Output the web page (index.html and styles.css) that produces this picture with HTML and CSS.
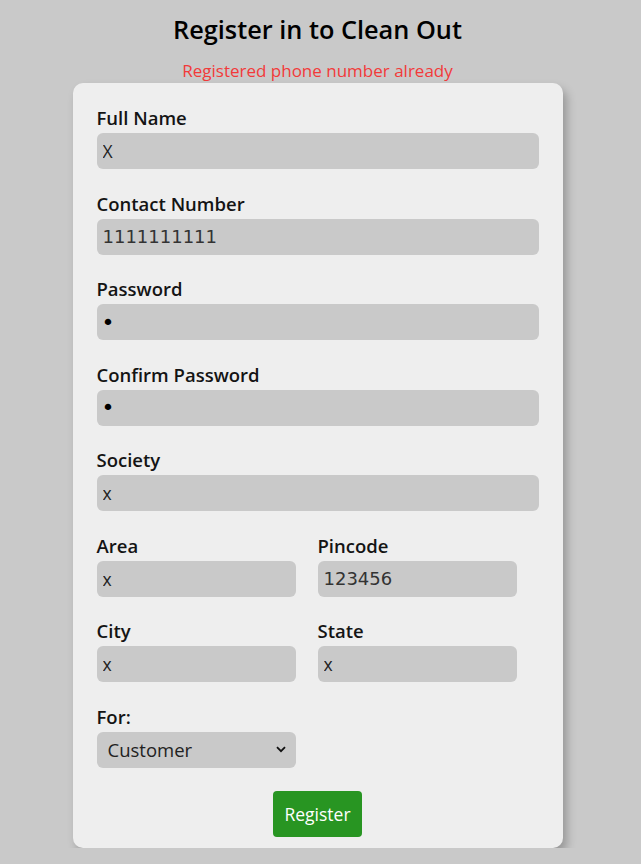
FILE: index.html
```html
<!DOCTYPE html>
<html>
<head>
<meta charset="utf-8">
<link rel="stylesheet" href="styles.css">
</head>
<body>
<div class="page">
  <h2 class="title">Register in to Clean Out</h2>
  <p class="error">Registered phone number already</p>
  <form class="card">
    <div class="field">
      <label class="label">Full Name</label>
      <input class="input" type="text" value="X">
    </div>
    <div class="field">
      <label class="label">Contact Number</label>
      <input class="input num" type="text" value="1111111111">
    </div>
    <div class="field">
      <label class="label">Password</label>
      <input class="input" type="password" value="x">
    </div>
    <div class="field">
      <label class="label">Confirm Password</label>
      <input class="input" type="password" value="x">
    </div>
    <div class="field">
      <label class="label">Society</label>
      <input class="input" type="text" value="x">
    </div>
    <div class="row">
      <div class="field">
        <label class="label">Area</label>
        <input class="input" type="text" value="x">
      </div>
      <div class="field">
        <label class="label">Pincode</label>
        <input class="input num" type="text" value="123456">
      </div>
    </div>
    <div class="row">
      <div class="field">
        <label class="label">City</label>
        <input class="input" type="text" value="x">
      </div>
      <div class="field">
        <label class="label">State</label>
        <input class="input" type="text" value="x">
      </div>
    </div>
    <div class="row">
      <div class="field">
        <label class="label">For:</label>
        <div class="select">
          <span class="select-text">Customer</span>
          <svg class="chev" width="10" height="7" viewBox="0 0 10 7"><path d="M1 1.2 L5 5.2 L9 1.2" fill="none" stroke="#111" stroke-width="1.8"/></svg>
        </div>
      </div>
    </div>
    <div class="actions">
      <button class="btn" type="button">Register</button>
    </div>
  </form>
</div>
</body>
</html>
```

FILE: styles.css
```css
html, body {
  margin: 0;
  padding: 0;
  background: #c9c9c9;
}
body {
  font-family: "Open Sans", "Noto Sans", sans-serif;
  color: #000;
}
.page {
  width: 635px;
  display: flex;
  flex-direction: column;
  align-items: center;
}
.title {
  margin: 13px 0 0;
  font-size: 25.3px;
  line-height: 32px;
  font-weight: 600;
}
.error {
  margin: 15px 0 0;
  font-size: 17px;
  line-height: 22px;
  color: #f23a3a;
}
.card {
  box-sizing: border-box;
  width: 490px;
  margin-top: 1px;
  padding: 23px 24px 11px;
  background: #eeeeee;
  border-radius: 10px;
  box-shadow: 4px 6px 10px rgba(0, 0, 0, 0.25);
}
.field {
  display: flex;
  flex-direction: column;
  margin-bottom: 22.5px;
}
.label {
  font-size: 18.5px;
  line-height: 24px;
  font-weight: 600;
  color: #141414;
}
.input {
  box-sizing: border-box;
  margin-top: 3px;
  height: 36px;
  width: 100%;
  border: none;
  border-radius: 6px;
  background: #c9c9c9;
  padding: 0 6px;
  font-family: "Open Sans", sans-serif;
  font-size: 17.5px;
  color: #222;
  outline: none;
}
.input[type="password"] {
  font-family: "DejaVu Sans", sans-serif;
  font-size: 22px;
  color: #000;
  padding-left: 5px;
}
.num {
  font-family: "DejaVu Sans", sans-serif;
  font-size: 18px;
  color: #333;
}
.row {
  display: grid;
  grid-template-columns: 199px 199px;
  column-gap: 22px;
}
.select {
  box-sizing: border-box;
  margin-top: 3px;
  height: 36px;
  border-radius: 6px;
  background: #c9c9c9;
  padding: 0 10px 0 11px;
  display: flex;
  align-items: center;
  justify-content: space-between;
}
.select-text {
  font-family: "Open Sans", sans-serif;
  font-size: 18.5px;
  color: #222;
}
.actions {
  display: flex;
  justify-content: center;
  margin-top: 0.5px;
}
.btn {
  width: 89px;
  height: 46px;
  border: none;
  border-radius: 4px;
  background: #289522;
  color: #fff;
  font-family: "Open Sans", sans-serif;
  font-size: 17.5px;
}
```
